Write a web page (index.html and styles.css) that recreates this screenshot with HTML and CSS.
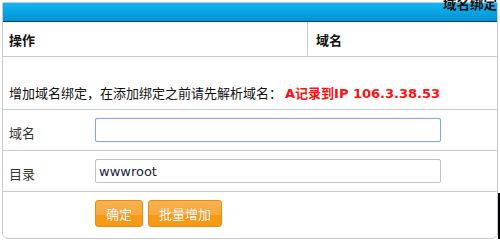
FILE: index.html
```html
<!DOCTYPE html>
<html lang="zh-CN">
<head>
<meta charset="utf-8">
<title>域名绑定</title>
<link rel="stylesheet" href="styles.css">
</head>
<body>
<div class="panel">
  <div class="panel-head"><span class="panel-title">域名绑定</span></div>
  <div class="row row-head">
    <div class="cell-op">操作</div>
    <div class="cell-domain">域名</div>
  </div>
  <div class="row row-note">
    增加域名绑定，在添加绑定之前请先解析域名：<strong class="red">A记录到IP 106.3.38.53</strong>
  </div>
  <div class="row row-field">
    <label class="label" for="domain">域名</label>
    <input class="input input-focus" id="domain" type="text" value="">
  </div>
  <div class="row row-field">
    <label class="label" for="dir">目录</label>
    <input class="input" id="dir" type="text" value="wwwroot">
  </div>
  <div class="row row-actions">
    <button class="btn" type="button">确定</button>
    <button class="btn" type="button">批量增加</button>
  </div>
  <div class="edge-mark"></div>
</div>
</body>
</html>
```

FILE: styles.css
```css
html, body {
  margin: 0;
  padding: 0;
  background: #ffffff;
}
body {
  font-family: "DejaVu Sans", "Noto Sans CJK SC", sans-serif;
  font-size: 13px;
  color: #111111;
}
.panel {
  position: relative;
  margin: 2px 0 0 2px;
  width: 496px;
  box-sizing: border-box;
  border: 1px solid #c9c9d6;
  border-radius: 0 0 6px 6px;
}
.panel-head {
  height: 18px;
  background: linear-gradient(#12b6f0, #0092d6);
  border-bottom: 1px solid #173c52;
  display: flex;
  justify-content: flex-end;
  padding-right: 0;
}
.panel-title {
  font-weight: bold;
  font-size: 13.5px;
  line-height: 14px;
  margin-top: -6px;
  color: #111111;
}
.row {
  display: flex;
  align-items: center;
  border-bottom: 1px solid #c9c9d1;
  box-sizing: border-box;
}
.row-head {
  height: 35px;
  font-weight: bold;
  align-items: stretch;
}
.cell-op {
  width: 305px;
  padding-left: 6px;
  box-sizing: border-box;
  border-right: 1px solid #c9c9d1;
  display: flex;
  align-items: center;
}
.cell-domain {
  padding-left: 8px;
  display: flex;
  align-items: center;
}
.row-note {
  height: 53px;
  padding: 26px 0 8px 6px;
  align-items: center;
}
.red {
  color: #ff1010;
  margin-left: 3px;
}
.row-field {
  height: 41px;
  padding: 8px 0 8px 0;
}
.label {
  width: 92px;
  padding-left: 6px;
  box-sizing: border-box;
  color: #333333;
  position: relative;
  top: 2px;
}
.input {
  width: 346px;
  height: 24px;
  box-sizing: border-box;
  border: 1px solid #c2c2c2;
  border-radius: 2px;
  padding: 0 3px;
  font-family: "DejaVu Sans", "Noto Sans CJK SC", sans-serif;
  font-size: 13px;
  color: #1c1c3a;
  background: #ffffff;
  outline: none;
}
.input-focus {
  border-color: #82a8ea;
  box-shadow: 0 0 1px #a8c4f4;
}
.row-actions {
  height: 46px;
  border-bottom: none;
  padding: 8px 0 11px 92px;
  gap: 5px;
  align-items: flex-start;
}
.btn {
  height: 27px;
  padding: 0 10px;
  border: 1px solid #df8c1c;
  border-radius: 3px;
  background: linear-gradient(#f9b24e 0%, #f8a940 55%, #f59b16 58%, #f49a12 100%);
  color: #ffffff;
  font-family: "Noto Sans CJK SC", sans-serif;
  font-size: 13px;
  line-height: 25px;
  text-shadow: 0 0 1px rgba(150, 80, 0, 0.4);
}
.edge-mark {
  position: absolute;
  right: -3px;
  bottom: -3px;
  width: 2px;
  height: 48px;
  background: #000000;
}
```
